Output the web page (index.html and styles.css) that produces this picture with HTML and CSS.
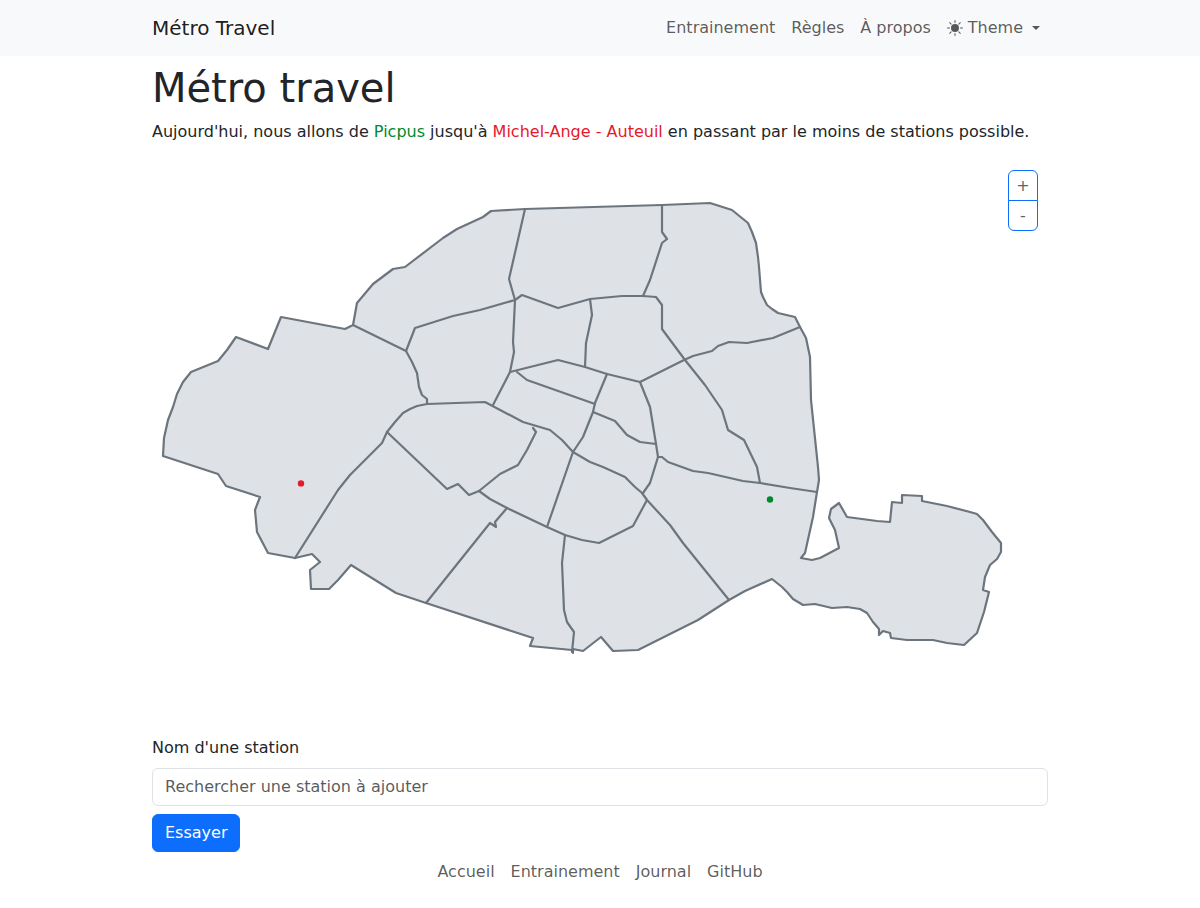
FILE: index.html
```html
<!DOCTYPE html>
<html lang="fr">
<head>
<meta charset="utf-8">
<title>Métro Travel</title>
<link rel="stylesheet" href="styles.css">
</head>
<body>
<nav class="navbar">
  <div class="container navbar-inner">
    <a class="brand" href="#">Métro Travel</a>
    <ul class="nav-list">
      <li><a class="nav-link" href="#">Entrainement</a></li>
      <li><a class="nav-link" href="#">Règles</a></li>
      <li><a class="nav-link" href="#">À propos</a></li>
      <li><a class="nav-link theme-toggle" href="#"><svg class="sun" viewBox="0 0 16 16" width="16" height="16" aria-hidden="true"><path d="M8 12a4 4 0 1 0 0-8 4 4 0 0 0 0 8zM8 0a.5.5 0 0 1 .5.5v2a.5.5 0 0 1-1 0v-2A.5.5 0 0 1 8 0zm0 13a.5.5 0 0 1 .5.5v2a.5.5 0 0 1-1 0v-2A.5.5 0 0 1 8 13zm8-5a.5.5 0 0 1-.5.5h-2a.5.5 0 0 1 0-1h2a.5.5 0 0 1 .5.5zM3 8a.5.5 0 0 1-.5.5h-2a.5.5 0 0 1 0-1h2A.5.5 0 0 1 3 8zm10.657-5.657a.5.5 0 0 1 0 .707l-1.414 1.415a.5.5 0 1 1-.707-.708l1.414-1.414a.5.5 0 0 1 .707 0zm-9.193 9.193a.5.5 0 0 1 0 .707L3.05 13.657a.5.5 0 0 1-.707-.707l1.414-1.414a.5.5 0 0 1 .707 0zm9.193 2.121a.5.5 0 0 1-.707 0l-1.414-1.414a.5.5 0 0 1 .707-.707l1.414 1.414a.5.5 0 0 1 0 .707zM4.464 4.465a.5.5 0 0 1-.707 0L2.343 3.05a.5.5 0 1 1 .707-.707l1.414 1.414a.5.5 0 0 1 0 .708z"/></svg><span>Theme</span><span class="caret"></span></a></li>
    </ul>
  </div>
</nav>
<main class="container">
  <h1>Métro travel</h1>
  <p class="intro">Aujourd'hui, nous allons de <span class="from">Picpus</span> jusqu'à <span class="to">Michel-Ange - Auteuil</span> en passant par le moins de stations possible.</p>
  <div class="map">
    <div class="zoom-group">
      <button class="zoom-btn" type="button">+</button>
      <button class="zoom-btn" type="button">-</button>
    </div>
    <svg class="map-svg" viewBox="152 160 896 575" width="896" height="575" role="img" aria-label="Carte de Paris">
      <path class="land" d="M163 456L164 438L168 420L173 407L177 394L183 382L191 372L218 361L227 350L236 337L268 349L281 317L345 329L353 325L357 303L373 284L393 269L405 267L443 238L457 229L483 217L491 211L525 209L662 205L710 203L732 210L748 223L752 232L756 243L758 257L759 267L761 292L763 297L767 305L772 309L778 313L795 317L800 327L806 338L810 357L811 400L818 467L819 480L817 492L813 517L805 553L801 558L812 560L820 558L839 548L835 530L829 518L831 509L839 503L847 517L877 521L890 522L892 502L902 503L902 495L922 496L922 501L947 506L970 512L977 514L983 520L992 532L1001 543L1001 552L997 559L990 565L985 577L983 590L989 592L984 612L977 633L964 645L947 643L933 640L907 640L891 638L890 633L883 631L879 635L879 629L873 622L867 613L860 609L847 607L832 608L815 604L803 605L793 599L787 592L782 587L772 579L745 591L729 600L698 620L638 650L613 651L601 637L583 651L573 649L573 653L572 650L530 646L533 638L426 603L396 593L351 565L338 580L329 589L311 589L310 570L320 562L312 554L295 558L268 553L257 532L255 510L260 497L226 486L218 474Z"/>
      <path class="border" d="M353 325L406 351L415 328L453 316L480 310L515 300"/>
      <path class="border" d="M406 351L412 362L417 373L419 387L422 395L427 399L427 404"/>
      <path class="border" d="M387 432L395 422L403 413L410 409L417 406L427 404L485 402L523 422L550 430L562 440L573 452L590 462L603 467L625 477L635 487L642 493L647 500L670 525L683 543L729 600"/>
      <path class="border" d="M295 558L338 490L350 475L382 443L387 432L447 489L458 484L469 495L479 491L500 474L518 465L527 450L536 432L533 428"/>
      <path class="border" d="M479 491L490 499L507 508L547 527L565 535L582 540L599 543L633 526L647 500"/>
      <path class="border" d="M507 508L495 522L496 527L490 523L426 603"/>
      <path class="border" d="M565 535L562 563L564 610L567 622L574 632L572 652"/>
      <path class="border" d="M547 527L573 452L583 437L593 412L595 403L607 374"/>
      <path class="border" d="M593 412L615 421L627 435L640 442L656 444"/>
      <path class="border" d="M640 382L650 407L656 444L658 457L650 483L643 493"/>
      <path class="border" d="M658 457L662 457L668 462L693 471L708 473L743 481L760 483L790 488L817 492"/>
      <path class="border" d="M760 483L757 467L744 440L728 430L722 410L720 407L705 385L685 360L662 329L662 305L656 297L643 296L622 296L590 299L558 308L522 295L515 300"/>
      <path class="border" d="M643 296L650 280L662 243L667 239L662 232L662 205"/>
      <path class="border" d="M525 209L509 279L515 300L513 342L514 352L510 372L493 405"/>
      <path class="border" d="M510 372L558 360L585 367L607 374L640 382L684 360L693 356L712 351L718 346L729 342L747 343L773 338L800 327"/>
      <path class="border" d="M590 299L592 315L586 343L585 367"/>
      <path class="border" d="M517 372L527 380L595 404"/>
      <circle class="dot-to" cx="301" cy="483.4" r="3.2"/>
      <circle class="dot-from" cx="770" cy="499.5" r="3.2"/>
    </svg>
  </div>
  <form class="station-form">
    <label class="form-label" for="station">Nom d'une station</label>
    <input class="form-control" id="station" type="text" placeholder="Rechercher une station à ajouter">
    <button class="btn-primary" type="button">Essayer</button>
  </form>
</main>
<footer class="footer">
  <a class="nav-link" href="#">Accueil</a>
  <a class="nav-link" href="#">Entrainement</a>
  <a class="nav-link" href="#">Journal</a>
  <a class="nav-link" href="#">GitHub</a>
</footer>
</body>
</html>
```
FILE: styles.css
```css
* { box-sizing: border-box; }
html, body { margin: 0; padding: 0; }
body {
  font-family: "DejaVu Sans", sans-serif;
  font-size: 16px;
  line-height: 24px;
  color: #212529;
  background: #fff;
}
a { text-decoration: none; }
.container {
  width: 920px;
  margin: 0 auto;
  padding: 0 12px;
}
.navbar { background: #f8f9fa; height: 56px; }
.navbar-inner {
  display: flex;
  align-items: center;
  justify-content: space-between;
  height: 56px;
}
.brand { font-size: 20px; line-height: 30px; color: rgba(0,0,0,.9); }
.nav-list { display: flex; list-style: none; margin: 0; padding: 0; }
.nav-link { display: block; padding: 8px; color: rgba(0,0,0,.65); }
.theme-toggle { display: flex; align-items: center; }
.sun { fill: currentColor; margin-right: 5px; }
.caret {
  width: 0; height: 0;
  margin-left: 9px;
  border-top: 4.8px solid currentColor;
  border-left: 4.8px solid transparent;
  border-right: 4.8px solid transparent;
}
h1 {
  font-size: 40px;
  font-weight: 400;
  line-height: 48px;
  margin: 8px 0;
}
.intro { margin: 0 0 16px; }
.from { color: #008a2e; }
.to { color: #e6192b; }
.map { position: relative; height: 575px; }
.map-svg { display: block; }
.land { fill: #dee2e6; stroke: #6c757d; stroke-width: 2.2; stroke-linejoin: round; }
.border { fill: none; stroke: #6c757d; stroke-width: 2.2; stroke-linejoin: round; stroke-linecap: round; }
.dot-to { fill: #e6192b; }
.dot-from { fill: #008a2e; }
.zoom-group {
  position: absolute;
  top: 10px;
  right: 10px;
  display: flex;
  flex-direction: column;
  width: 30px;
}
.zoom-btn {
  height: 31px;
  padding: 0;
  font: inherit;
  color: #5c6670;
  background: #fff;
  border: 1px solid #0d6efd;
}
.zoom-btn:first-child { border-radius: 6px 6px 0 0; height: 31px; }
.zoom-btn:last-child { border-radius: 0 0 6px 6px; margin-top: -1px; }
.station-form { display: flex; flex-direction: column; align-items: flex-start; }
.form-label { padding-top: 1px; margin-bottom: 8px; }
.form-control {
  width: 100%;
  height: 38px;
  padding: 5px 12px 7px;
  font: inherit;
  color: #212529;
  border: 1px solid #dee2e6;
  border-radius: 6px;
  background: #fff;
}
.form-control::placeholder { color: rgba(33,37,41,.75); opacity: 1; }
.btn-primary {
  margin-top: 8px;
  height: 38px;
  padding: 6px 12px;
  font: inherit;
  color: #fff;
  background: #0d6efd;
  border: 1px solid #0d6efd;
  border-radius: 6px;
}
.footer { display: flex; justify-content: center; }
```
